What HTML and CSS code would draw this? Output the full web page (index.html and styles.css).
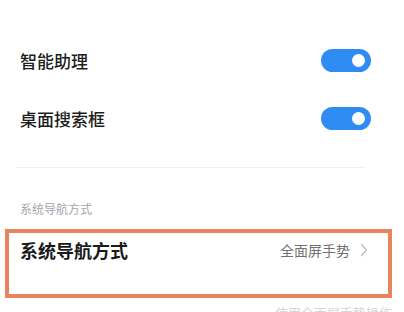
FILE: index.html
```html
<!DOCTYPE html>
<html lang="zh-CN">
<head>
<meta charset="utf-8">
<title>设置</title>
<link rel="stylesheet" href="styles.css">
</head>
<body>
<div class="page">
  <div class="list">
    <div class="row">
      <span class="label">智能助理</span>
      <span class="switch"><span class="knob"></span></span>
    </div>
    <div class="row">
      <span class="label">桌面搜索框</span>
      <span class="switch"><span class="knob"></span></span>
    </div>
  </div>
  <div class="divider"></div>
  <div class="section-title">系统导航方式</div>
  <div class="highlight">
    <div class="nav-row">
      <span class="nav-label">系统导航方式</span>
      <span class="nav-value">全面屏手势
        <svg class="chev" width="8" height="14" viewBox="0 0 8 14"><polyline points="1.5,1.5 6.5,7 1.5,12.5" fill="none" stroke="#bdbdbd" stroke-width="1.3" stroke-linecap="round" stroke-linejoin="round"/></svg>
      </span>
    </div>
  </div>
  <div class="cutoff">使用全面屏手势操作</div>
</div>
</body>
</html>
```

FILE: styles.css
```css
html, body {
  margin: 0;
  padding: 0;
  background: #ffffff;
}
body {
  width: 404px;
  height: 312px;
  overflow: hidden;
  font-family: "Noto Sans CJK SC", "Noto Sans", sans-serif;
}
.page {
  padding-top: 31px;
}
.list {
  display: flex;
  flex-direction: column;
}
.row {
  height: 58px;
  display: flex;
  align-items: center;
  justify-content: space-between;
  padding: 0 33px 0 20px;
}
.label {
  font-size: 17px;
  font-weight: 500;
  color: #1e1e1e;
}
.switch {
  width: 50px;
  height: 23px;
  border-radius: 12px;
  background: #2f8cf3;
  display: flex;
  align-items: center;
  justify-content: flex-end;
  padding-right: 6px;
  box-sizing: border-box;
}
.knob {
  width: 13px;
  height: 13px;
  border-radius: 50%;
  background: #ffffff;
}
.divider {
  margin: 20px 39px 0 16px;
  height: 1px;
  background: #efefef;
}
.section-title {
  margin-top: 33px;
  padding-left: 20px;
  font-size: 12px;
  line-height: 16px;
  color: #a2a6ad;
}
.highlight {
  margin: 12px 0 0 5px;
  width: 387px;
  height: 69px;
  box-sizing: border-box;
  border: 4px solid #e8845e;
  padding: 5px 20px 0 11px;
}
.nav-row {
  height: 24px;
  display: flex;
  align-items: center;
  justify-content: space-between;
}
.nav-label {
  font-size: 18px;
  font-weight: 700;
  color: #1a1a1a;
}
.nav-value {
  display: flex;
  align-items: center;
  gap: 10px;
  font-size: 14px;
  color: #727272;
}
.chev {
  display: block;
}
.cutoff {
  margin-top: 5px;
  padding-right: 12px;
  text-align: right;
  font-size: 13px;
  color: #d6d6d6;
}
```
